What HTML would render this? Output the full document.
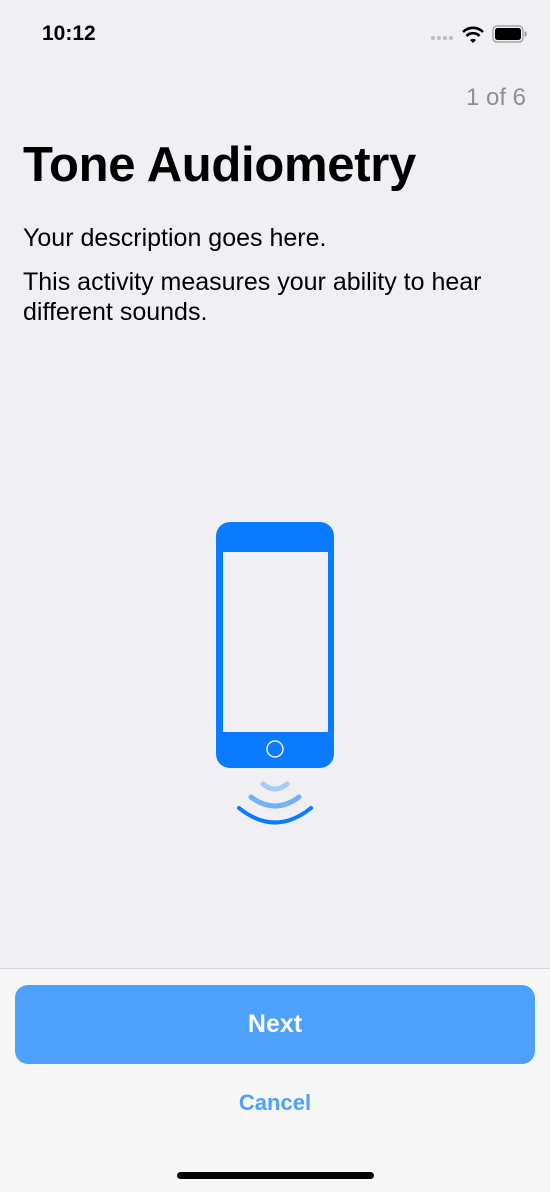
<html><head><style>
body{margin:0;width:550px;height:1191px;background:#efeff4;font-family:"Liberation Sans",sans-serif;position:relative;overflow:hidden}
.a{position:absolute}
</style></head><body>
<div class="a" style="left:42px;top:22px;font-size:21px;font-weight:bold;color:#000">10:12</div>
<svg class="a" style="left:428px;top:24px" width="100" height="22" viewBox="0 0 100 22">
<circle cx="5" cy="14" r="2" fill="#bbb"/><circle cx="11" cy="14" r="2" fill="#bbb"/><circle cx="17" cy="14" r="2" fill="#bbb"/><circle cx="23" cy="14" r="2" fill="#bbb"/>
<path d="M35 8 A14 14 0 0 1 55 8" stroke="#000" stroke-width="2.6" fill="none"/>
<path d="M38.5 12 A9 9 0 0 1 51.5 12" stroke="#000" stroke-width="2.6" fill="none"/>
<path d="M42 16 L45 19 L48 16 A4.5 4.5 0 0 0 42 16Z" fill="#000"/>
<rect x="65" y="2" width="30" height="16" rx="4" fill="none" stroke="#999" stroke-width="1.2"/>
<rect x="67" y="4" width="26" height="12" rx="2.5" fill="#000"/>
<rect x="96.5" y="7.5" width="2" height="5" rx="1" fill="#999"/>
</svg>
<div class="a" style="right:24px;top:84px;font-size:24px;color:#8e8e93">1 of 6</div>
<div class="a" style="left:23px;top:137px;font-size:49px;font-weight:bold;color:#000;letter-spacing:-0.3px">Tone Audiometry</div>
<div class="a" style="left:23px;top:224px;font-size:25px;color:#000">Your description goes here.</div>
<div class="a" style="left:23px;top:267px;font-size:25px;color:#000;line-height:30px;width:520px">This activity measures your ability to hear different sounds.</div>
<svg class="a" style="left:200px;top:510px" width="150" height="330">
<rect x="16" y="12" width="118" height="246" rx="14" fill="#0a7aff"/>
<rect x="23" y="42" width="105" height="180" fill="#efeff4"/>
<circle cx="75" cy="239" r="8" fill="none" stroke="#efeff4" stroke-width="1.5"/>
<path d="M63 274 Q75 284 87 274" stroke="#a8ccf8" stroke-width="5" stroke-linecap="round" fill="none"/>
<path d="M51 287 Q75 305 99 287" stroke="#72b0fa" stroke-width="5" stroke-linecap="round" fill="none"/>
<path d="M39 298 Q75 327 111 298" stroke="#0a7aff" stroke-width="4" stroke-linecap="round" fill="none"/>
</svg>
<div class="a" style="left:0;top:968px;width:550px;height:223px;background:#f7f7f7;border-top:1px solid #d6d6d8"></div>
<div class="a" style="left:15px;top:985px;width:520px;height:79px;border-radius:13px;background:#4da1fb;color:#fff;font-size:25px;font-weight:bold;text-align:center;line-height:79px">Next</div>
<div class="a" style="left:0;top:1090px;width:550px;text-align:center;font-size:22px;font-weight:bold;color:#4da1fb">Cancel</div>
<div class="a" style="left:177px;top:1172px;width:197px;height:7px;border-radius:4px;background:#000"></div>
</body></html>
